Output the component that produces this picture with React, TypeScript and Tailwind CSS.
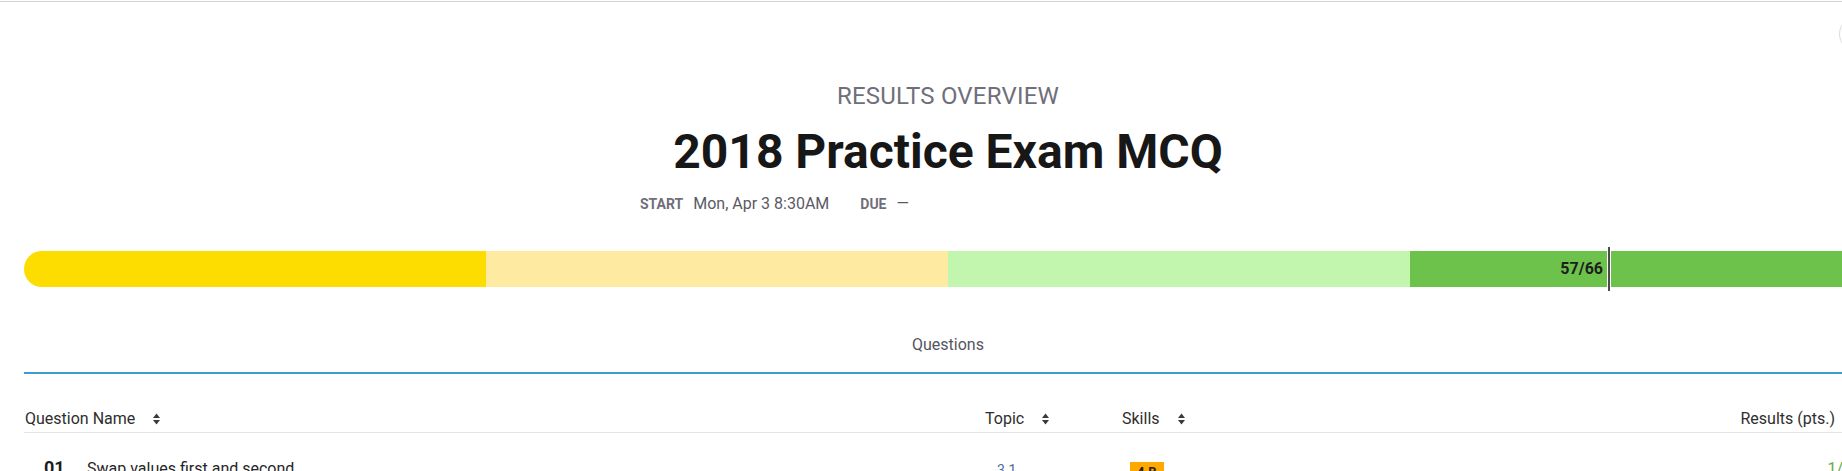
import type { FC } from "react";

const SortIcon: FC = () => (
  <svg width="7" height="12" viewBox="0 0 7 12" className="shrink-0">
    <path d="M0 5 L3.5 0.5 L7 5 Z" fill="#3a3a3a" />
    <path d="M0 7 L7 7 L3.5 11.5 Z" fill="#3a3a3a" />
  </svg>
);

const HeaderCell: FC<{ label: string; className?: string }> = ({ label, className = "" }) => (
  <div className={`flex items-center gap-[18px] text-[16px] leading-none text-[#2e2e2e] ${className}`}>
    <span>{label}</span>
    <SortIcon />
  </div>
);

const App: FC = () => {
  return (
    <div className="relative h-[471px] w-[1842px] overflow-hidden bg-white font-['Roboto','Liberation_Sans',sans-serif]">
      <div className="mt-px h-px bg-[#d2d2d2]" />

      {/* round button peeking in at the top right */}
      <div className="absolute left-[1839px] top-4 h-9 w-9 rounded-full border border-[#dcdcdc] bg-white" />

      <div className="ml-6 w-[1848px]">
        <div className="flex flex-col items-center pt-[82px]">
          <p className="text-[24px] leading-none tracking-[0.2px] text-[#6f6f7b]">RESULTS OVERVIEW</p>
          <h1 className="mt-[20px] text-[48px] font-bold leading-none text-[#171717]">2018 Practice Exam MCQ</h1>
        </div>

        <div className="ml-[616px] mt-[20px] flex items-baseline leading-none">
          <span className="text-[14px] font-bold text-[#6f6f7b]">START</span>
          <span className="ml-[10px] text-[16px] text-[#5a5a66]">Mon, Apr 3 8:30AM</span>
          <span className="ml-[31px] text-[14px] font-bold text-[#6f6f7b]">DUE</span>
          <span className="ml-[10px] text-[16px] text-[#5a5a66]">—</span>
        </div>

        {/* score bar */}
        <div className="relative mt-[39px] h-9">
          <div className="flex h-9 overflow-hidden rounded-full">
            <div className="flex-1 bg-[#fddc00]" />
            <div className="flex-1 bg-[#feeaa0]" />
            <div className="flex-1 bg-[#c2f5ae]" />
            <div className="flex-1 bg-[#6cc24a]" />
          </div>
          <div className="absolute inset-y-0 left-0 flex w-[1583px] items-center justify-end pr-[4px] text-[16px] font-bold text-[#1e1e1e]">
            57/66
          </div>
          <div className="absolute -top-[4px] -bottom-[4px] left-[1583px] box-content w-[2px] border-x-[1.5px] border-white bg-[#4b4b4b]" />
        </div>

        {/* tabs */}
        <div className="mt-[50px] flex justify-center border-b-2 border-[#3d9bd6] pb-[19px]">
          <span className="text-[16px] leading-none text-[#555560]">Questions</span>
        </div>

        {/* table */}
        <div className="grid grid-cols-[961px_137px_1fr_auto] border-b border-[#e3e3e3] pb-[5px] pt-[37px]">
          <HeaderCell label="Question Name" className="pl-px" />
          <HeaderCell label="Topic" />
          <HeaderCell label="Skills" />
          <HeaderCell label="Results (pts.)" className="pr-3" />
        </div>

        <div className="grid grid-cols-[961px_137px_1fr_auto] items-start">
          <div className="flex items-baseline pl-5 pt-[26px] leading-none">
            <span className="w-[43px] text-[18px] font-bold text-[#1e1e1e]">01</span>
            <span className="text-[16px] text-[#262626]">Swap values first and second</span>
          </div>
          <div className="pl-3 pt-[30px] text-[14px] leading-none text-[#4d6b99]">3.1</div>
          <div className="pl-2 pt-[26px]">
            <span className="inline-block bg-[#ffa800] px-[7px] py-[3px] text-[13px] font-bold leading-none text-[#1e1e1e]">
              4.B
            </span>
          </div>
          <div className="pr-5 pt-[28px] text-right text-[16px] leading-none text-[#6aab3f]">1/1</div>
        </div>
      </div>
    </div>
  );
};

export default App;
